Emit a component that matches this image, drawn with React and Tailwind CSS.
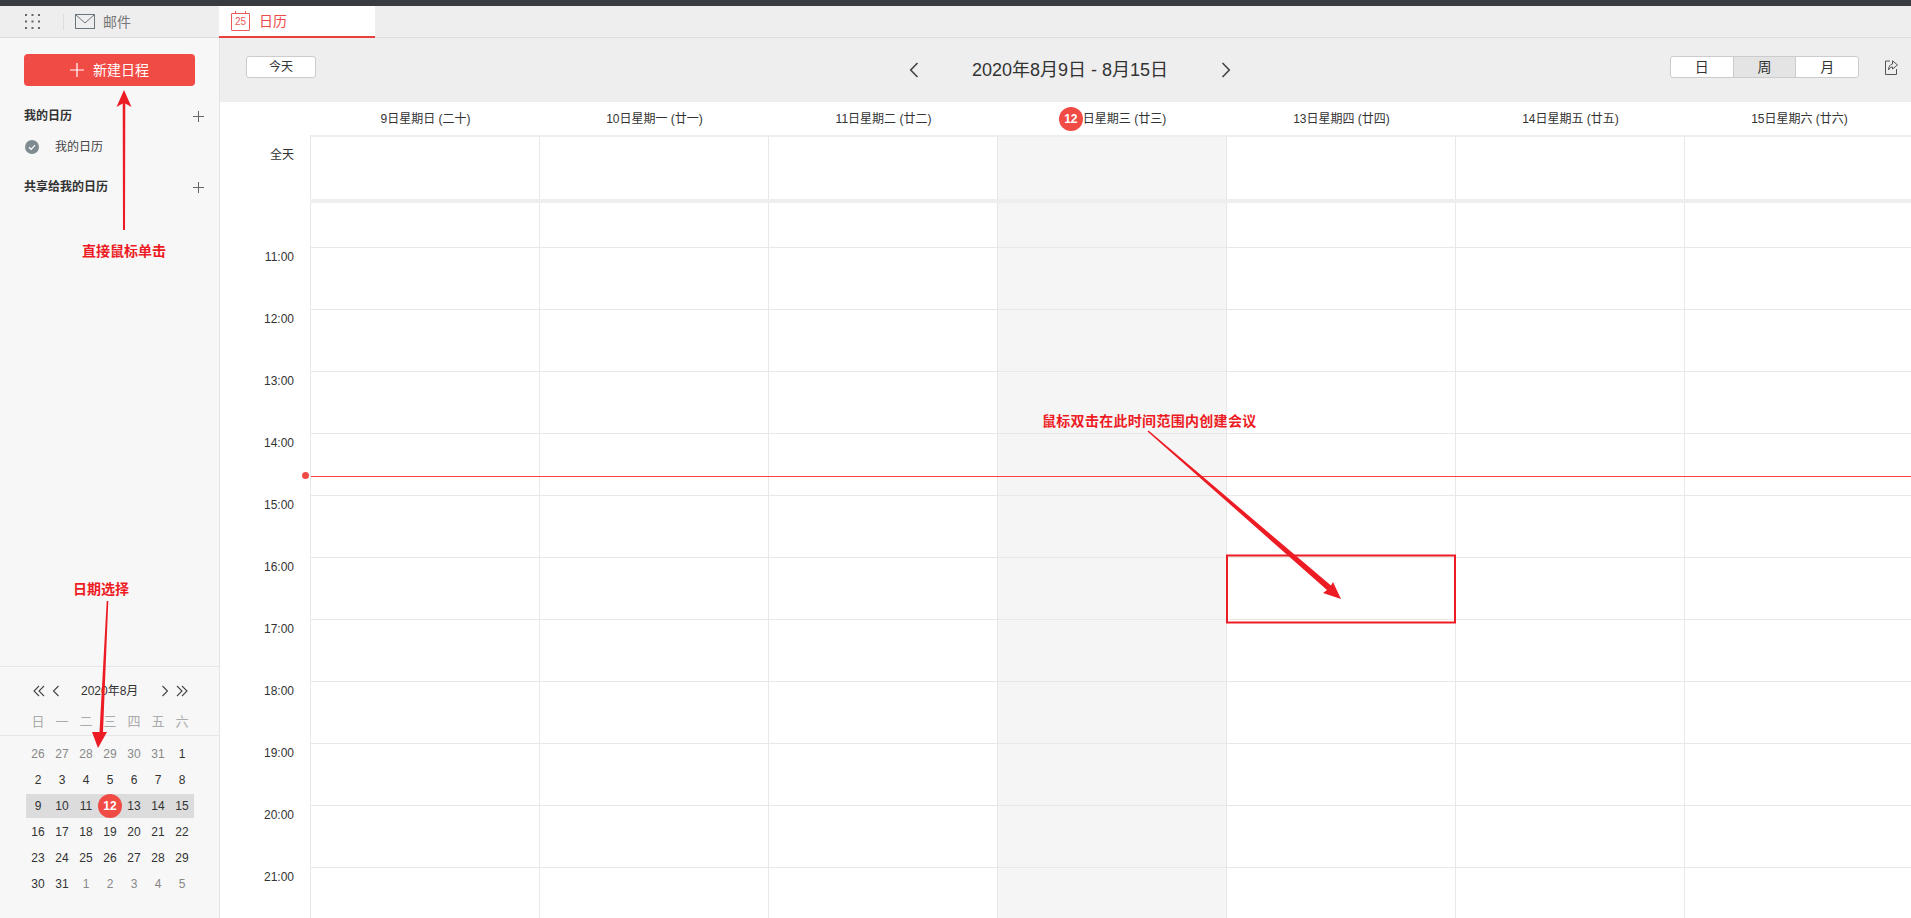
import React from "react";

const FONT = "font-['Liberation_Sans','Noto_Sans_CJK_SC',sans-serif]";

const days = [
  "9日星期日 (二十)",
  "10日星期一 (廿一)",
  "11日星期二 (廿二)",
  "12日星期三 (廿三)",
  "13日星期四 (廿四)",
  "14日星期五 (廿五)",
  "15日星期六 (廿六)",
];

const hours = ["11:00", "12:00", "13:00", "14:00", "15:00", "16:00", "17:00", "18:00", "19:00", "20:00", "21:00"];

const weekNames = ["日", "一", "二", "三", "四", "五", "六"];

const miniDates = [
  [26, 27, 28, 29, 30, 31, 1],
  [2, 3, 4, 5, 6, 7, 8],
  [9, 10, 11, 12, 13, 14, 15],
  [16, 17, 18, 19, 20, 21, 22],
  [23, 24, 25, 26, 27, 28, 29],
  [30, 31, 1, 2, 3, 4, 5],
];

function PlusIcon() {
  return (
    <svg width="11" height="11" viewBox="0 0 11 11" fill="none" stroke="#666" strokeWidth="1">
      <path d="M5.5 0v11M0 5.5h11" />
    </svg>
  );
}

function GridDots() {
  const dots = [];
  for (let r = 0; r < 3; r++) {
    for (let c = 0; c < 3; c++) {
      dots.push(<rect key={`${r}-${c}`} x={c * 6.5} y={r * 6.5} width="2" height="2" fill="#666" />);
    }
  }
  return (
    <svg width="15" height="15" viewBox="0 0 15 15">
      {dots}
    </svg>
  );
}

function Chevron({ dir, double, size = 10 }) {
  const left = dir === "left";
  return (
    <svg width={double ? 12 : 8} height={size + 2} viewBox={double ? "0 0 12 12" : "0 0 8 12"} fill="none" stroke="#444" strokeWidth="1.1">
      {double ? (
        left ? (
          <path d="M6 1 1 6l5 5M11 1 6 6l5 5" />
        ) : (
          <path d="m1 1 5 5-5 5M6 1l5 5-5 5" />
        )
      ) : left ? (
        <path d="M6.5 1 1.5 6l5 5" />
      ) : (
        <path d="m1.5 1 5 5-5 5" />
      )}
    </svg>
  );
}

function Sidebar() {
  return (
    <aside className="w-[220px] shrink-0 h-full flex flex-col bg-[#f7f7f7] border-r border-[#e3e3e3]">
      <div className="px-6 pt-4">
        <button className="w-[171px] h-8 rounded-[4px] bg-[#f14b46] text-white text-sm flex items-center justify-center gap-[9px]">
          <svg width="14" height="14" viewBox="0 0 14 14" stroke="#fff" strokeWidth="1.2">
            <path d="M7 0v14M0 7h14" />
          </svg>
          <span>新建日程</span>
        </button>
        <div className="mt-[21px] h-[18px] flex items-center justify-between text-xs font-bold text-[#333]">
          <span>我的日历</span>
          <span className="mr-[-9px] flex"><PlusIcon /></span>
        </div>
        <div className="mt-[13px] h-[18px] flex items-center text-xs text-[#444]">
          <svg width="14" height="14" viewBox="0 0 14 14" className="ml-[1px]">
            <circle cx="7" cy="7" r="7" fill="#7f8b90" />
            <path d="m4 7.2 2.2 2.1L10 5.2" fill="none" stroke="#fff" strokeWidth="1.2" />
          </svg>
          <span className="ml-[16px]">我的日历</span>
        </div>
        <div className="mt-[22px] h-[18px] flex items-center justify-between text-xs font-bold text-[#333]">
          <span>共享给我的日历</span>
          <span className="mr-[-9px] flex"><PlusIcon /></span>
        </div>
      </div>

      <div className="mt-auto h-[252px] border-t border-[#e6e6e6]">
        <div className="h-[47px] relative flex items-center pl-[33px] text-xs text-[#333]">
          <Chevron dir="left" double />
          <span className="ml-[7px] flex"><Chevron dir="left" /></span>
          <span className="ml-[21px] w-[57px] text-center whitespace-nowrap">2020年8月</span>
          <span className="ml-[23px] flex"><Chevron dir="right" /></span>
          <span className="ml-[7px] flex"><Chevron dir="right" double /></span>
        </div>
        <div className="h-[22px] border-b border-[#e6e6e6] pl-[26px] flex items-start text-[13px] text-[#aaa]">
          {weekNames.map((w) => (
            <div key={w} className="w-6 text-center leading-[16px]">{w}</div>
          ))}
        </div>
        <div className="pt-[5px] pl-[26px]">
          {miniDates.map((row, r) => (
            <div key={r} className="h-[26px] flex items-center">
              <div className={`flex h-6 ${r === 2 ? "bg-[#dcdcdc]" : ""}`}>
                {row.map((d, i) => {
                  const dim = (r === 0 && i < 6) || (r === 5 && i > 1);
                  const today = r === 2 && i === 3;
                  return (
                    <div
                      key={i}
                      className={`w-6 h-6 flex items-center justify-center text-xs ${
                        today ? "bg-[#f14b46] rounded-full text-white font-bold" : dim ? "text-[#888]" : "text-[#333]"
                      }`}
                    >
                      {d}
                    </div>
                  );
                })}
              </div>
            </div>
          ))}
        </div>
      </div>
    </aside>
  );
}

function Toolbar() {
  return (
    <div className="h-16 shrink-0 bg-[#eeeeee] relative flex items-start justify-between pl-[26px] pr-[13px] pt-[18px]">
      <button className="w-[70px] h-[22px] bg-white border border-[#cccccc] rounded-[3px] text-xs text-[#333]">今天</button>
      <div className="absolute left-[689px] top-0 h-full flex items-center text-lg text-[#333]">
        <svg width="10" height="16" viewBox="0 0 10 16" fill="none" stroke="#444" strokeWidth="1.6">
          <path d="M8.5 1 1.7 8l6.8 7" />
        </svg>
        <span className="ml-[53px] w-[195px] text-center whitespace-nowrap">2020年8月9日 - 8月15日</span>
        <svg width="10" height="16" viewBox="0 0 10 16" fill="none" stroke="#444" strokeWidth="1.6" className="ml-[54px]">
          <path d="m1.5 1 6.8 7-6.8 7" />
        </svg>
      </div>
      <div className="flex items-center gap-[26px]">
        <div className="w-[189px] h-[22px] flex bg-white border border-[#cccccc] rounded-[3px] text-sm text-[#333] overflow-hidden">
          <div className="flex-1 flex items-center justify-center">日</div>
          <div className="flex-1 flex items-center justify-center bg-[#e4e4e4] border-x border-[#cccccc]">周</div>
          <div className="flex-1 flex items-center justify-center">月</div>
        </div>
        <svg width="13" height="15" viewBox="0 0 13 15" fill="none" stroke="#555" strokeWidth="1">
          <path d="M5 1H.5v13.500h11V9" />
          <path d="M7.500 .8 12.500 5l-5 4V7C5.500 7 4.300 8.300 3.500 10c0-3.300 1.600-5.700 4-6z" />
        </svg>
      </div>
    </div>
  );
}

function WeekGrid() {
  return (
    <div className="flex-1 overflow-hidden bg-white relative text-xs text-[#333]">
      {/* day titles */}
      <div className="h-[33px] flex">
        <div className="w-[90px] shrink-0" />
        {days.map((d, i) => (
          <div key={d} className="w-[229px] shrink-0 pl-[2px] flex items-center justify-center whitespace-nowrap">
            {i === 3 ? (
              <>
                <span className="w-6 h-6 rounded-full bg-[#f14b46] text-white font-bold flex items-center justify-center">12</span>
                <span>{d.slice(2)}</span>
              </>
            ) : (
              d
            )}
          </div>
        ))}
      </div>

      {/* all day */}
      <div className="h-[64px] flex">
        <div className="w-[90px] shrink-0 text-right pr-4 pt-3 leading-[16px]">全天</div>
        {days.map((d, i) => (
          <div key={d} className={`w-[229px] shrink-0 border-l border-t-2 border-l-[#e8e8e8] border-t-[#eeeeee] ${i === 3 ? "bg-[#f5f5f5]" : ""}`} />
        ))}
      </div>
      <div className="h-1 ml-[90px] bg-[#eeeeee]" />

      {/* partial first row */}
      <div className="h-[44px] flex">
        <div className="w-[90px] shrink-0" />
        {days.map((d, i) => (
          <div key={d} className={`w-[229px] shrink-0 border-l border-[#e8e8e8] ${i === 3 ? "bg-[#f5f5f5]" : ""}`} />
        ))}
      </div>

      {hours.map((h) => (
        <div key={h} className="h-[62px] flex">
          <div className="w-[90px] shrink-0 text-right pr-4 pt-[2px] leading-[16px]">{h}</div>
          {days.map((d, i) => (
            <div key={d} className={`w-[229px] shrink-0 border-l border-t border-[#e8e8e8] ${i === 3 ? "bg-[#f5f5f5]" : ""}`} />
          ))}
        </div>
      ))}

      {/* current time line */}
      <div className="absolute left-[91px] right-0 top-[374px] h-px bg-[#ff4040]" />
      <div className="absolute left-[82px] top-[370px] w-[7px] h-[7px] rounded-full bg-[#f14b46]" />
    </div>
  );
}

// red notes drawn over the screenshot
function Annotations() {
  return (
    <>
      <svg className="absolute left-0 top-0 pointer-events-none" width="1911" height="918" viewBox="0 0 1911 918">
        <polygon points="124,90 131.500,107 125.300,103.500 125,230 123,230 122.700,103.500 116.500,107" fill="#ed1c24" />
        <polygon points="108.300,601 106.700,601 99.500,732 92,732 98,748 107,732 103,732" fill="#ed1c24" />
        <polygon points="1148.500,430.500 1147.500,431.500 1327,590 1323,593 1341,599 1333,582 1331,585.500" fill="#ed1c24" />
        <rect x="1227" y="555.500" width="228" height="67" fill="none" stroke="#ed1c24" strokeWidth="2" />
      </svg>
      <span className="absolute left-[82px] top-[241px] text-sm font-bold text-[#ed1c24] leading-5 whitespace-nowrap">直接鼠标单击</span>
      <span className="absolute left-[73px] top-[579px] text-sm font-bold text-[#ed1c24] leading-5 whitespace-nowrap">日期选择</span>
      <span className="absolute left-[1042px] top-[411px] text-sm font-bold text-[#ed1c24] leading-5 whitespace-nowrap tracking-[0.3px]">鼠标双击在此时间范围内创建会议</span>
    </>
  );
}

export default function App() {
  return (
    <div className={`relative w-full h-screen overflow-hidden flex flex-col bg-white ${FONT}`}>
      <div className="h-[6px] shrink-0 bg-[#383c40]" />

      <div className="h-[32px] shrink-0 bg-[#eeeeee] border-b border-[#dddddd] flex items-stretch">
        <div className="w-[219px] shrink-0 flex items-center pl-[25px]">
          <GridDots />
          <div className="ml-[23px] w-px h-4 bg-[#dddddd]" />
          <svg width="20" height="15" viewBox="0 0 20 15" fill="none" stroke="#69777d" strokeWidth="1" className="ml-[11px]">
            <rect x=".5" y=".5" width="19" height="14" />
            <path d="m1 1 9 8 9-8" />
          </svg>
          <span className="ml-2 text-sm text-[#777]">邮件</span>
        </div>
        <div className="w-[156px] h-[32px] shrink-0 bg-white border-b-2 border-[#e8403c] flex items-center pl-3">
          <div className="relative w-[19px] h-[18px] border border-[#ee5a5a] rounded-[1px] mt-[1px] flex items-center justify-center text-[10px] leading-none text-[#ee5a5a]">
            25
            <span className="absolute left-[3px] top-[-3px] w-px h-[3px] bg-[#ee5a5a]" />
            <span className="absolute right-[3px] top-[-3px] w-px h-[3px] bg-[#ee5a5a]" />
          </div>
          <span className="ml-[9px] text-sm text-[#ee4a46]">日历</span>
        </div>
      </div>

      <div className="flex-1 min-h-0 flex">
        <Sidebar />
        <main className="flex-1 min-w-0 flex flex-col">
          <Toolbar />
          <WeekGrid />
        </main>
      </div>

      <Annotations />
    </div>
  );
}
